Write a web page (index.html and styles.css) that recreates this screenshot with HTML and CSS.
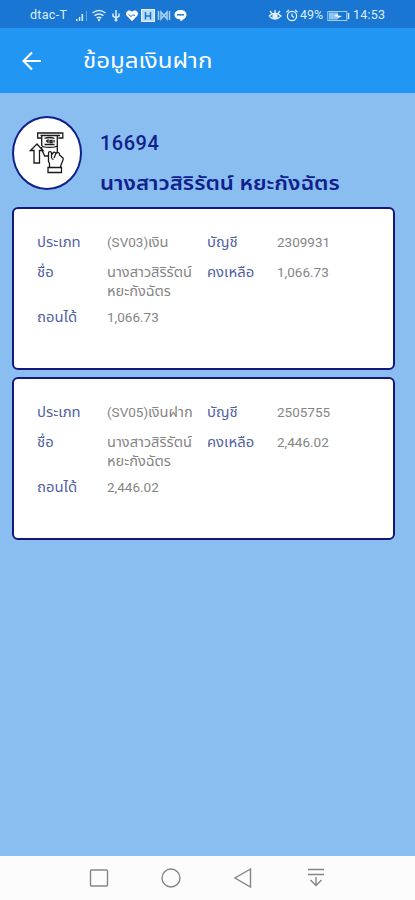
FILE: index.html
```html
<!DOCTYPE html>
<html lang="th">
<head>
<meta charset="utf-8">
<meta name="viewport" content="width=device-width, initial-scale=1">
<title>ข้อมูลเงินฝาก</title>
<link rel="stylesheet" href="styles.css">
</head>
<body>
<div class="status">
  <span class="carrier">dtac-T</span>
  <svg class="status-left" width="114" height="16" viewBox="0 0 114 16">
    <g fill="#d9ecfb">
      <path d="M2 12h1.500v2H2zM4.800 10h1.500v4H4.800zM7.500 7h1.600v7H7.500z"/>
      <path d="M12 4h1v10h-1z" opacity=".4"/>
    </g>
    <g fill="none" stroke="#d9ecfb" stroke-width="1.500">
      <path d="M18.500 6q6.500-5 13 0M20.500 8.700q4.500-3.500 9 0M22.700 11.200q2.300-1.800 4.600 0"/>
      <path d="M42 3v11M39 6.500v2.500l3 2 3-2V6.500"/>
    </g>
    <circle cx="25" cy="13" r="1.200" fill="#d9ecfb"/>
    <circle cx="42" cy="13" r="1.500" fill="#d9ecfb"/>
    <path d="M58 14.300L52.500 8.500C50.500 5 55 1.800 58 4.800c3-3 7.500.2 5.500 3.700z" fill="#fff"/>
    <path d="M54.500 7.500l2.500 2 1.800-1.500 2.200.3" fill="none" stroke="#1976d2"/>
    <rect x="67.500" y="2.500" width="13" height="12" fill="#b9dcfa" stroke="#e4f2fd"/>
    <path d="M71.500 5v7.500M76.500 5v7.500M71.500 9h5" stroke="#1976d2" stroke-width="1.500"/>
    <path d="M84.500 4v9M95.500 4v9M87 5v7l3-3.500 3 3.500V5l-3 3.500z" fill="none" stroke="#a9d3f8" stroke-width="1.500"/>
    <path d="M106.500 3c3.600 0 6 2 6 4.800 0 3-3 5-6 6.700v-2c-3.600 0-6-2-6-4.700S103 3 106.500 3z" fill="#fff"/>
    <path d="M103 7.800h7" stroke="#1976d2" stroke-width="1.500"/>
  </svg>
  <svg class="status-right" width="30" height="16" viewBox="0 0 30 16" fill="none" stroke="#e2f1fd" stroke-width="1.300">
    <path d="M1 9q6-5.500 12 0-6 6-12 0M2 4l2 2.500M7 3v3.500M12 4l-2 2.500"/>
    <circle cx="7" cy="9.300" r="2" fill="#e2f1fd"/>
    <circle cx="24" cy="9" r="4.600"/>
    <path d="M24 6.500V9l2 1.500M18.500 5.200L21 3M29.500 5.200L27 3"/>
  </svg>
  <span class="percent">49%</span>
  <svg class="battery" width="23" height="16" viewBox="0 0 23 16">
    <rect x=".8" y="4.500" width="19" height="9" fill="none" stroke="#a3cff5"/>
    <path d="M2 5.500h9v7H2z" fill="#8fc3f1"/>
    <path d="M7 9l4-2v1.500l4 .5-4 2.300V9.800z" fill="#fff"/>
    <path d="M21.500 6v6" stroke="#d9ecfb" stroke-width="1.500"/>
  </svg>
  <span class="clock">14:53</span>
</div>
<header class="appbar">
  <svg class="back" width="20" height="20" viewBox="0 0 20 20" fill="none" stroke="#fff" stroke-width="2.100"><path d="M19 10H2M10 1.500L1.500 10l8.500 8.500"/></svg>
  <h1 class="title">ข้อมูลเงินฝาก</h1>
</header>
<main class="content">
  <section class="member">
    <div class="avatar">
      <svg width="36" height="44" viewBox="0 0 36 44" fill="none" stroke="#1a1a1a" stroke-width="1.300">
        <path d="M12 7H8.700V2h25.100v5h-4.500M11.500 4.500h19.500"/>
        <path d="M12.700 5v9.500c1.500 2.500 14 2.500 15.600 0M28.300 5v17M12.700 16v2.500l3 6.500h4"/>
        <path d="M15.500 7.500q5-2 10 0M17 10.500l2-1.500v3M21 11.500v-2h2v2zM25 11.500V9M15.500 13.500h10"/>
        <path d="M5 32V19.500H1.500L8 13l6 6.500h-3.500V32z"/>
        <path d="M20.500 36.500v-4l-1-2V22c0-1.800 3-1.800 3 0v5M22.500 24l1.500-2c1.500-2 3.500 0 2.500 1.500L25 27M27 22.500c2-2 4-.5 3.500 1.500l3.500 3c1.500 2-2 4-2.500 9.500M22.500 27.500l2 1"/>
        <path d="M19 36.500h13.500v5H19z"/>
      </svg>
    </div>
    <div class="identity">
      <div class="number">16694</div>
      <div class="name">นางสาวสิริรัตน์ หยะกังฉัตร</div>
    </div>
  </section>
  <section class="card">
    <span class="label">ประเภท</span><span class="value">(SV03)<span class="thai">เงิน</span></span>
    <span class="label">บัญชี</span><span class="value">2309931</span>
    <span class="label">ชื่อ</span><span class="value"><span class="thai">นางสาวสิริรัตน์<br>หยะกังฉัตร</span></span>
    <span class="label">คงเหลือ</span><span class="value">1,066.73</span>
    <span class="label last">ถอนได้</span><span class="value last">1,066.73</span>
  </section>
  <section class="card">
    <span class="label">ประเภท</span><span class="value">(SV05)<span class="thai">เงินฝาก</span></span>
    <span class="label">บัญชี</span><span class="value">2505755</span>
    <span class="label">ชื่อ</span><span class="value"><span class="thai">นางสาวสิริรัตน์<br>หยะกังฉัตร</span></span>
    <span class="label">คงเหลือ</span><span class="value">2,446.02</span>
    <span class="label last">ถอนได้</span><span class="value last">2,446.02</span>
  </section>
</main>
<nav class="navbar">
  <svg width="20" height="20" viewBox="0 0 20 20"><rect x="1.500" y="2" width="17" height="16" rx="1"/></svg>
  <svg width="20" height="20" viewBox="0 0 20 20"><circle cx="10" cy="10" r="9"/></svg>
  <svg width="20" height="20" viewBox="0 0 20 20"><path d="M17.500 1L2 10l15.500 9z"/></svg>
  <svg width="20" height="20" viewBox="0 0 20 20"><path d="M2 1.500h16M2 6.500h16M10 9v8.500M4.500 12l5.500 5.500 5.500-5.500"/></svg>
</nav>
</body>
</html>
```
FILE: styles.css
```css
* { box-sizing: border-box; }
body {
  margin: 0;
  height: 900px;
  display: flex;
  flex-direction: column;
  overflow: hidden;
  background: #8abef1;
  font-family: Roboto, "Noto Sans Thai", "Noto Sans", sans-serif;
}
svg { display: block; flex: none; }
.status {
  height: 28px;
  flex: none;
  display: flex;
  align-items: center;
  padding: 1px 27px 0 30px;
  background: #1976d2;
  color: #dceefc;
  font-size: 12.5px;
  white-space: nowrap;
}
.carrier { width: 44px; letter-spacing: .3px; }
.status-right { margin-left: 80px; }
.percent { width: 27px; padding-left: 2px; }
.battery { margin-left: 2px; }
.clock { margin-left: 3px; letter-spacing: .2px; }
.appbar {
  height: 65px;
  flex: none;
  display: flex;
  align-items: center;
  padding-left: 22px;
  background: #2196f3;
  color: #fff;
}
.title {
  margin: 0 0 0 41px;
  font-size: 22px;
  font-weight: 400;
  line-height: 30px;
  white-space: nowrap;
  transform: scaleX(1.095);
  transform-origin: left;
}
.content {
  flex: 1;
  padding: 23px 20px 0 12px;
}
.member { display: flex; height: 91px; }
.avatar {
  width: 70px;
  height: 74px;
  flex: none;
  display: flex;
  align-items: center;
  justify-content: center;
  border: 2px solid #10218b;
  border-radius: 50%;
  background: #fff;
}
.identity {
  padding: 12px 0 0 18px;
  color: #10218b;
  font-weight: 500;
  font-size: 20px;
  line-height: 30px;
  white-space: nowrap;
}
.number { letter-spacing: .5px; }
.name {
  margin-top: 12px;
  font-size: 19px;
  font-weight: 600;
  line-height: 28px;
  transform: scaleX(1.17);
  transform-origin: left;
}
.card {
  height: 163px;
  margin-bottom: 7px;
  display: grid;
  grid-template-columns: 70px 100px 70px 1fr;
  grid-template-rows: 19px 38px 19px;
  row-gap: 11px;
  padding: 24px 0 0 23px;
  border: 2px solid #12187c;
  border-radius: 6px;
  background: #fff;
  font-size: 13.5px;
  line-height: 19px;
  white-space: nowrap;
}
.card .last { margin-top: -4px; }
.label {
  color: #51629f;
  justify-self: start;
  transform: scaleX(1.1);
  transform-origin: left;
}
.value { color: #858585; }
.thai {
  display: inline-block;
  vertical-align: top;
  transform: scaleX(1.08);
  transform-origin: left;
}
.navbar {
  height: 44px;
  flex: none;
  display: flex;
  gap: 52.2px;
  align-items: center;
  padding-left: 89px;
  background: #fcfcfc;
}
.navbar svg { fill: none; stroke: #858585; stroke-width: 1.400; }
```
